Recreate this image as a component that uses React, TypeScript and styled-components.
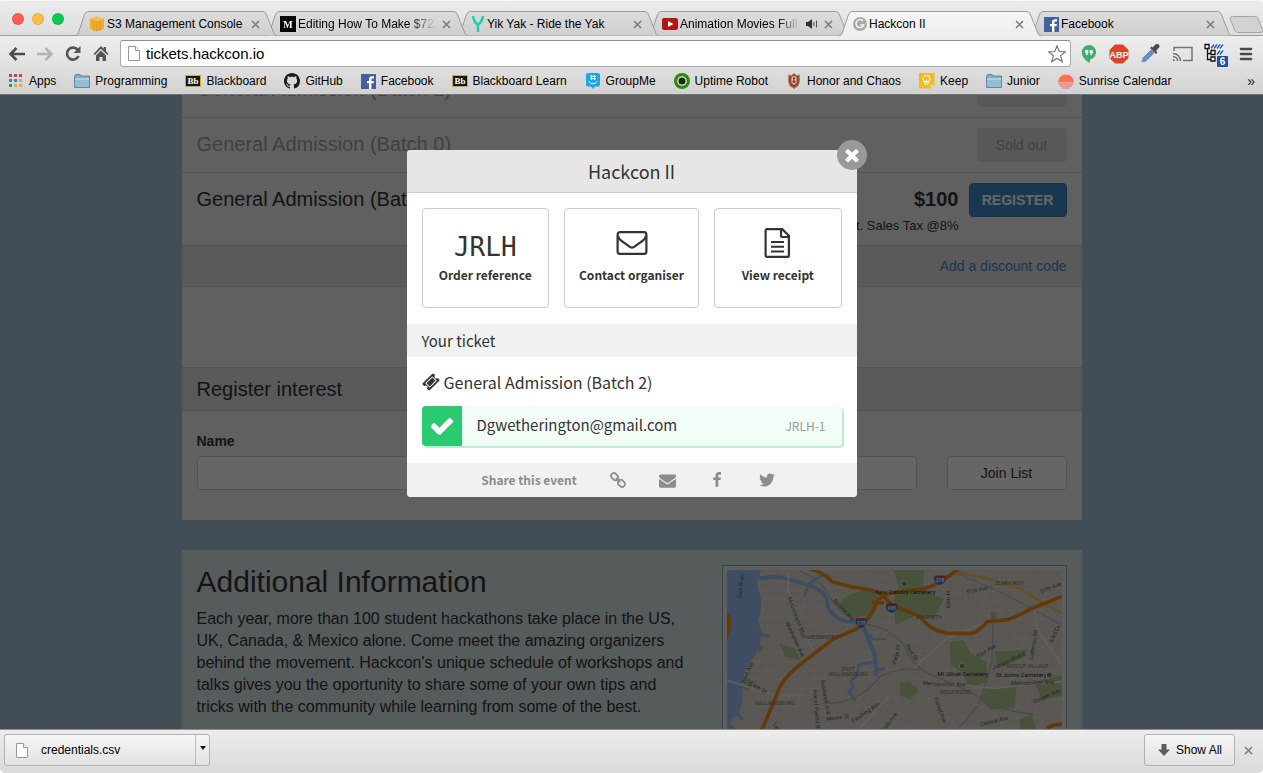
import React from 'react';
import styled, { createGlobalStyle, css } from 'styled-components';

const uiFont = '"Liberation Sans", Arial, sans-serif';
const dialogFont = '"Noto Sans CJK SC", "Noto Sans", sans-serif';
const monoFont = '"DejaVu Sans Mono", monospace';

const GlobalStyle = createGlobalStyle`
  * { box-sizing: border-box; }
  body { margin: 0; background: #fff; font-family: ${uiFont}; }
  button, input { font: inherit; color: inherit; margin: 0; }
  button { padding: 0; border: 0; background: none; cursor: pointer; }
  svg { display: block; flex: none; }
  h1, h2, p { margin: 0; font-weight: normal; }
`;

/* ---------- window ---------- */

const Window = styled.div`
  display: grid;
  grid-template-columns: minmax(0, 1fr);
  grid-template-rows: auto 1fr auto;
  height: 100vh;
  overflow: hidden;
  border-radius: 5px;
`;

const Chrome = styled.header`
  border-bottom: 1px solid #757575;
  background: #d3d3d3;
`;

const TabStrip = styled.div`
  position: relative;
  display: flex;
  align-items: flex-end;
  height: 36px;
  padding-left: 12px;
  background: linear-gradient(#ececec, #dedede);
  box-shadow: inset 0 -1px 0 #9c9c9c, inset 0 1px 0 #f7f7f7;
`;

const Lights = styled.div`
  display: flex;
  flex: none;
  gap: 8px;
  width: 63px;
  padding-bottom: 11px;
`;

const Light = styled.button<{ $color: string }>`
  width: 12px;
  height: 12px;
  border-radius: 50%;
  background: ${(p) => p.$color};
  box-shadow: inset 0 0 0 1px rgba(0, 0, 0, 0.08);
`;

const TabBox = styled.div<{ $order: number }>`
  position: relative;
  z-index: ${(p) => p.$order};
  display: flex;
  align-items: center;
  flex: 0 0 202px;
  min-width: 0;
  height: 25px;
  margin-right: -11px;
  padding: 1px 15px 0 14px;
`;

const TabShape = styled.svg`
  position: absolute;
  inset: 0;
`;

const TabTitle = styled.button<{ $fade?: boolean }>`
  position: relative;
  display: flex;
  align-items: center;
  gap: 2px;
  flex: 1;
  min-width: 0;
  overflow: hidden;
  white-space: nowrap;
  font-size: 12px;
  line-height: 16px;
  color: #000;
  ${(p) =>
    p.$fade &&
    css`
      mask-image: linear-gradient(to right, #000 82%, transparent 99%);
    `}
`;

const TabTools = styled.span`
  position: relative;
  display: flex;
  align-items: center;
  gap: 6px;
  padding-left: 4px;
  padding-right: 2px;
`;

const IconButton = styled.button`
  display: flex;
  align-items: center;
  justify-content: center;
`;

const NewTab = styled(IconButton)`
  margin: 0 0 3px 8px;
`;

const Surface = styled.div`
  background: linear-gradient(#eeeeee, #d2d2d2);
`;

const Toolbar = styled.div`
  display: flex;
  align-items: center;
  height: 34px;
  padding: 1px 10px 0 8px;
`;

const NavButtons = styled.nav`
  display: flex;
  gap: 10px;
  width: 112px;
`;

const Omnibox = styled.div`
  display: flex;
  align-items: center;
  flex: 1;
  height: 27px;
  padding: 0 4px 0 7px;
  gap: 6px;
  border: 1px solid #ababab;
  border-top-color: #8f8f8f;
  border-radius: 3px;
  background: #fff;
`;

const UrlInput = styled.input`
  flex: 1;
  min-width: 0;
  border: 0;
  padding: 0;
  outline: 0;
  background: transparent;
  font-size: 15px;
  line-height: 20px;
  color: #000;
`;

const Extensions = styled.div`
  display: flex;
  align-items: center;
  gap: 10px;
  padding-left: 8px;
`;

const BookmarkBar = styled.nav`
  display: flex;
  align-items: center;
  gap: 18px;
  height: 24px;
  padding: 0 8px 2px;
`;

const Bookmark = styled.a`
  display: flex;
  align-items: center;
  gap: 5px;
  white-space: nowrap;
  font-size: 12px;
  line-height: 16px;
  color: #000;
  text-decoration: none;
`;

const Overflow = styled.button`
  margin-left: auto;
  font-size: 14px;
  line-height: 16px;
  color: #222;
`;

/* ---------- page ---------- */

const Viewport = styled.main`
  position: relative;
  overflow: hidden;
  min-height: 0;
  background: #a8c1d7;
  color: #333;
`;

const Column = styled.div`
  display: flex;
  flex-direction: column;
  gap: 30px;
  max-width: 900px;
  margin: -32px auto 0;
`;

const Panel = styled.section`
  background: #f0f0f0;
`;

const TicketRow = styled.div<{ $off?: boolean }>`
  display: flex;
  align-items: flex-start;
  gap: 10px;
  padding: 10px 15px ${(p) => (p.$off ? 10 : 8)}px;
  border-bottom: 1px solid #ccc;
  color: ${(p) => (p.$off ? '#a2a2a2' : '#333')};
`;

const TicketName = styled.div`
  flex: 1;
  font-size: 20px;
  line-height: 32px;
`;

const Price = styled.div`
  text-align: right;
  font-size: 13px;
  line-height: 22px;
`;

const Amount = styled.strong`
  display: block;
  font-size: 20px;
  line-height: 32px;
`;

const PageButton = styled.button<{ $kind: 'off' | 'primary' | 'plain' }>`
  height: 34px;
  border-radius: 4px;
  font-size: 14px;
  line-height: 20px;
  ${(p) =>
    p.$kind === 'off' &&
    css`
      width: 90px;
      background: #dcdcdc;
      color: #a0a0a0;
    `}
  ${(p) =>
    p.$kind === 'primary' &&
    css`
      width: 98px;
      border: 1px solid #357ebd;
      background: #428bca;
      color: #fff;
      font-weight: bold;
    `}
  ${(p) =>
    p.$kind === 'plain' &&
    css`
      width: 120px;
      border: 1px solid #ccc;
      background: #fff;
      color: #333;
    `}
`;

const Discount = styled.div`
  padding: 0 15px;
  border-bottom: 1px solid #ccc;
  background: #e0e0e0;
  text-align: right;
  font-size: 14px;
  line-height: 40px;
`;

const PageLink = styled.a`
  color: #428bca;
  text-decoration: none;
`;

const Spacer = styled.div`
  height: 81px;
  border-bottom: 1px solid #ccc;
`;

const PanelTitle = styled.h2`
  padding: 0 15px;
  border-bottom: 1px solid #ccc;
  background: #e0e0e0;
  font-size: 20px;
  line-height: 42px;
`;

const InterestForm = styled.form`
  display: flex;
  align-items: flex-end;
  gap: 30px;
  padding: 20px 15px 30px;
`;

const Field = styled.div`
  display: flex;
  flex: 1;
  flex-direction: column;
  gap: 5px;
`;

const Label = styled.label`
  font-size: 14px;
  font-weight: bold;
  line-height: 20px;
`;

const TextBox = styled.input`
  height: 34px;
  padding: 0 12px;
  border: 1px solid #ccc;
  border-radius: 4px;
  background: #fff;
  font-size: 14px;
`;

const InfoPanel = styled.section`
  display: flex;
  align-items: flex-start;
  gap: 30px;
  padding: 15px;
  background: #d8e3e5;
`;

const InfoText = styled.div`
  flex: 1;
`;

const InfoTitle = styled.h1`
  margin-bottom: 10px;
  font-size: 30px;
  line-height: 33px;
`;

const Paragraph = styled.p`
  font-size: 16px;
  line-height: 22px;
`;

const MapFrame = styled.figure`
  flex: none;
  margin: 0;
  padding: 4px;
  border: 1px solid #9aa5aa;
  background: #e6ecee;
`;

/* ---------- dialog ---------- */

const Backdrop = styled.div`
  position: absolute;
  inset: 0;
  display: flex;
  justify-content: center;
  align-items: flex-start;
  padding-top: 55px;
  background: rgba(0, 0, 0, 0.6);
`;

const Dialog = styled.div`
  position: relative;
  width: 450px;
  border-radius: 4px;
  background: #fff;
  font-family: ${dialogFont};
  color: #333;
`;

const CloseDialog = styled(IconButton)`
  position: absolute;
  top: -10px;
  right: -10px;
  width: 30px;
  height: 30px;
  border-radius: 50%;
  background: #999;
  color: #fff;
`;

const DialogTitle = styled.h2`
  border-bottom: 1px solid #ccc;
  border-radius: 4px 4px 0 0;
  background: #e6e6e6;
  text-align: center;
  font-size: 18px;
  line-height: 42px;
`;

const Tiles = styled.div`
  display: grid;
  grid-template-columns: 1fr 135px 1fr;
  gap: 15px;
  padding: 15px 15px 16px;
`;

const Tile = styled.button`
  display: flex;
  flex-direction: column;
  align-items: center;
  height: 100px;
  padding-top: 16px;
  border: 1px solid #ccc;
  border-radius: 4px;
  font-size: 12px;
  font-weight: bold;
  line-height: 20px;
`;

const TileFigure = styled.span<{ $mono?: boolean }>`
  display: flex;
  align-items: center;
  height: 36px;
  margin-bottom: 4px;
  ${(p) =>
    p.$mono &&
    css`
      padding-top: 8px;
      font-family: ${monoFont};
      font-size: 26px;
      font-weight: normal;
    `}
`;

const SubTitle = styled.h2`
  padding: 0 15px;
  background: #f1f1f1;
  font-size: 15px;
  line-height: 33px;
`;

const TicketBody = styled.div`
  padding: 12px 15px 17px;
`;

const TicketType = styled.div`
  display: flex;
  align-items: center;
  gap: 4px;
  margin-bottom: 11px;
  font-size: 16px;
  line-height: 26px;
`;

const Attendee = styled.div`
  display: flex;
  align-items: flex-start;
  height: 40px;
  padding-right: 16px;
  border-radius: 4px;
  background: #f3fdf8;
  box-shadow: 2px 2px 0 #bdefd0;
  line-height: 38px;
`;

const CheckBlock = styled.span`
  display: flex;
  align-items: center;
  justify-content: center;
  width: 40px;
  height: 40px;
  margin-right: 15px;
  border-radius: 4px 0 0 4px;
  background: #2acb70;
  color: #fff;
`;

const Email = styled.span`
  flex: 1;
  font-size: 15px;
`;

const TicketCode = styled.span`
  font-size: 12px;
  line-height: 40px;
  color: #999;
`;

const ShareBar = styled.footer`
  display: flex;
  align-items: center;
  justify-content: center;
  gap: 33px;
  height: 34px;
  padding-right: 6px;
  border-radius: 0 0 4px 4px;
  background: #f1f1f1;
  color: #8c8c8c;
  font-size: 12px;
  line-height: 34px;
  font-weight: bold;
`;

/* ---------- download shelf ---------- */

const Shelf = styled.footer`
  display: flex;
  align-items: center;
  gap: 9px;
  height: 44px;
  padding: 0 10px 3px 4px;
  border-top: 1px solid #8e8e8e;
  background: linear-gradient(#ececec, #dadada);
  font-size: 12px;
  color: #000;
`;

const ShelfGroup = styled.div`
  display: flex;
  height: 32px;
  margin-right: auto;
  border: 1px solid #b2b2b2;
  border-radius: 3px;
  background: linear-gradient(#f6f6f6, #e2e2e2);
`;

const ShelfFile = styled.button`
  display: flex;
  align-items: center;
  gap: 13px;
  width: 191px;
  padding-left: 11px;
  border-right: 1px solid #bbb;
`;

const ShelfMenu = styled(IconButton)`
  width: 13px;
  padding-bottom: 4px;
`;

const ShowAll = styled.button`
  display: flex;
  align-items: center;
  gap: 6px;
  height: 32px;
  padding: 0 12px 0 13px;
  border: 1px solid #b2b2b2;
  border-radius: 3px;
  background: linear-gradient(#f6f6f6, #e2e2e2);
`;

/* ---------- icons ---------- */

const glyphs = {
  check:
    'M1671 566q0 40-28 68l-724 724-136 136q-28 28-68 28t-68-28l-136-136-362-362q-28-28-28-68t28-68l136-136q28-28 68-28t68 28l294 295 656-657q28-28 68-28t68 28l136 136q28 28 28 68z',
  times:
    'M1490 1322q0 40-28 68l-136 136q-28 28-68 28t-68-28l-294-294-294 294q-28 28-68 28t-68-28l-136-136q-28-28-28-68t28-68l294-294-294-294q-28-28-28-68t28-68l136-136q28-28 68-28t68 28l294 294 294-294q28-28 68-28t68 28l136 136q28 28 28 68t-28 68l-294 294 294 294q28 28 28 68z',
  ticket:
    'M1024 452l316 316-572 572-316-316zm-211 979l618-618q19-19 19-45t-19-45l-362-362q-18-18-45-18t-45 18l-618 618q-19 19-19 45t19 45l362 362q18 18 45 18t45-18zm889-637l-907 908q-37 37-90.500 37t-90.500-37l-126-126q56-56 56-136t-56-136-136-56-136 56l-125-126q-37-37-37-90.500t37-90.500l907-906q37-37 90.500-37t90.500 37l125 125q-56 56-56 136t56 136 136 56 136-56l126 125q37 37 37 90.500t-37 90.500z',
  mail:
    'M1792 710v794q0 66-47 113t-113 47h-1472q-66 0-113-47t-47-113v-794q44 49 101 87 362 246 497 345 57 42 92.500 65.500t94.500 48 110 24.500h2q51 0 110-24.500t94.500-48 92.500-65.500q170-123 498-345 57-39 100-87zm0-294q0 79-49 151t-122 123q-376 261-468 325-10 7-42.500 31t-54 38.500-52 32.500-57.500 27-50 9h-2q-23 0-50-9t-57.500-27-52-32.500-54-38.500-42.500-31q-91-64-262-182.500t-205-142.500q-62-42-117-115.500t-55-136.500q0-78 41.500-130t118.500-52h1472q65 0 112.500 47t47.500 113z',
  facebook:
    'M1343 12v264h-157q-86 0-116 36t-30 108v189h293l-39 296h-254v759h-306v-759h-255v-296h255v-218q0-186 104-288.500t277-102.500q147 0 228 12z',
  twitter:
    'M1684 408q-67 98-162 167 1 14 1 42 0 130-38 259.500t-115.500 248.500-184.500 210.500-258 146-323 54.500q-271 0-496-145 35 4 78 4 225 0 401-138-105-2-188-64.500t-114-159.500q33 5 61 5 43 0 85-11-112-23-185.500-111.500t-73.500-205.500v-4q68 38 146 41-66-44-105-115t-39-154q0-88 44-163 121 149 294.500 238.500t371.500 99.500q-8-38-8-74 0-134 94.500-228.500t228.500-94.500q140 0 236 102 109-21 205-78-37 115-142 178 93-10 186-50z',
};

const Glyph = ({ name, size }: { name: keyof typeof glyphs; size: number }) => (
  <svg width={size} height={size} viewBox="0 0 1792 1792" fill="currentColor">
    <path d={glyphs[name]} />
  </svg>
);

const ChainIcon = () => (
  <svg width="16" height="16" viewBox="0 0 16 16" fill="none" stroke="currentColor" strokeWidth="1.7">
    <g transform="rotate(45 8 8)">
      <rect x="-0.6" y="5.2" width="7.6" height="5.6" rx="2.8" />
      <rect x="9" y="5.2" width="7.6" height="5.6" rx="2.8" />
      <path d="M5 8h6" />
    </g>
  </svg>
);

const EnvelopeOutline = () => (
  <svg width="32" height="26" viewBox="0 0 32 26" fill="none" stroke="#333" strokeWidth="2.2">
    <rect x="1.600" y="2.100" width="28.800" height="21.800" rx="2.400" />
    <path d="M2 5.500c0 2.500 2 4.200 3.500 5.300l7 5.100c1.400 1 2.300 1.700 3.500 1.700s2.100-.7 3.500-1.700l7-5.100c1.500-1.100 3.500-2.800 3.500-5.300" />
  </svg>
);

const ReceiptIcon = () => (
  <svg width="27" height="32" viewBox="0 0 27 32" fill="none" stroke="#333" strokeWidth="2.200">
    <path d="M3 2.100h15.200l6.700 6.700V28.500a1.400 1.400 0 0 1-1.400 1.400H3a1.400 1.400 0 0 1-1.400-1.400V3.500A1.400 1.400 0 0 1 3 2.100z" />
    <path d="M17 2.500v6.500a1 1 0 0 0 1 1h6.500" />
    <path d="M7 15h13M7 19.700h13M7 24.400h13" strokeWidth="2" />
  </svg>
);

const CrossIcon = () => (
  <svg width="9" height="9" viewBox="0 0 9 9" stroke="#7a7a7a" strokeWidth="1.500">
    <path d="M1 1l7 7M8 1l-7 7" />
  </svg>
);

const Speaker = () => (
  <svg width="12" height="10" viewBox="0 0 12 10">
    <path d="M0 3h2l4-3v10l-4-3H0z" fill="#333" />
    <path d="M7.800 3v4M10.500 1.500v7" stroke="#555" strokeWidth="1.100" fill="none" />
  </svg>
);

const AwsIcon = () => (
  <svg width="16" height="16" viewBox="0 0 16 16">
    <path d="M1 3l7-2.500L15 3v10l-7 2.500L1 13z" fill="#f0ae2c" />
    <path d="M1 3l7 2 7-2-7-2.500z" fill="#f7c050" />
    <path d="M8 5v10.500M5 4v10.500M11 4v10.500" stroke="#d79417" strokeWidth=".7" />
  </svg>
);

const badgeText = { fontFamily: 'Liberation Serif', fontWeight: 700 } as const;

const MediumIcon = () => (
  <svg width="16" height="16" viewBox="0 0 16 16">
    <path fill="#000" d="M0 0h16v16H0z" />
    <text x="8" y="12" textAnchor="middle" fontSize="10" fill="#fff" {...badgeText}>M</text>
  </svg>
);

const YakIcon = () => (
  <svg width="14" height="16" viewBox="0 0 14 16" fill="none" stroke="#1fd1b2" strokeWidth="2.500">
    <path d="M2 0c.4 3.500 1.800 6.500 5 9M12 0c-.4 3.500-1.800 6.500-5 9M7 8v8" />
  </svg>
);

const YoutubeIcon = () => (
  <svg width="16" height="12" viewBox="0 0 16 12">
    <rect width="16" height="12" rx="2" fill="#b8140f" />
    <path d="M6 3l5.500 3L6 9z" fill="#fff" />
  </svg>
);

const HackconIcon = () => (
  <svg width="14" height="14" viewBox="0 0 14 14">
    <circle cx="7" cy="7" r="7" fill="#a9a9a9" />
    <path d="M10 3.900A4 4 0 1 0 10.800 8H7.500" stroke="#f3f3f3" strokeWidth="1.500" fill="none" />
  </svg>
);

const FacebookIcon = () => (
  <svg width="15" height="15" viewBox="0 0 15 15">
    <path fill="#4460a0" d="M0 0h15v15H0z" />
    <path d="M8 15V9.200H6V7h2V5.300C8 3.300 9.200 2.200 11 2.200h2v2.200h-1.400c-.9 0-1.200.4-1.200 1.200V7h2.500l-.3 2.200h-2.200V15z" fill="#fff" />
  </svg>
);

const AppsIcon = () => {
  const colors = ['#e33', '#e33', '#e33', '#2a9d50', '#2f7de0', '#f0a828', '#2a9d50', '#f0a828', '#f0a828'];
  return (
    <svg width="16" height="14" viewBox="0 0 16 14">
      {colors.map((c, i) => (
        <rect key={i} x={1 + (i % 3) * 5} y={Math.floor(i / 3) * 5} width="3" height="3" fill={c} />
      ))}
    </svg>
  );
};

const FolderIcon = () => (
  <svg width="16" height="14" viewBox="0 0 16 14">
    <path d="M.5 13.500V2.500L1.500.500h4.500l1 1.500h8.500v11.500z" fill="#86aac2" stroke="#6088a3" />
    <path d="M1 4h14v9H1z" fill="#94bbd3" />
    <path d="M1 4h14v2H1z" fill="#b0cfe0" />
  </svg>
);

const BlackboardIcon = () => (
  <svg width="16" height="12" viewBox="0 0 16 12">
    <path d="M.5.500h15v11H.5z" fill="#151515" stroke="#dda432" />
    <text x="8" y="9" textAnchor="middle" fontSize="9" fill="#fff" {...badgeText}>Bb</text>
  </svg>
);

const GithubIcon = () => (
  <svg width="16" height="16" viewBox="0 0 16 16" fill="#1b1b1b">
    <path d="M8 0C3.580 0 0 3.580 0 8c0 3.540 2.290 6.530 5.470 7.590.4.070.55-.17.55-.38 0-.19-.01-.82-.01-1.490-2.010.37-2.530-.49-2.690-.94-.09-.23-.48-.94-.82-1.130-.28-.15-.68-.52-.01-.53.63-.01 1.080.58 1.230.82.72 1.210 1.870.87 2.330.66.07-.52.28-.87.51-1.070-1.780-.2-3.640-.89-3.640-3.950 0-.87.31-1.590.82-2.150-.08-.2-.36-1.020.08-2.120 0 0 .67-.21 2.200.82.64-.18 1.320-.27 2-.27s1.360.09 2 .27c1.530-1.040 2.200-.82 2.200-.82.44 1.100.16 1.920.08 2.120.51.56.82 1.270.82 2.150 0 3.070-1.870 3.750-3.650 3.950.29.25.54.73.54 1.480 0 1.070-.01 1.930-.01 2.200 0 .21.15.46.55.38A8.010 8.010 0 0 0 16 8c0-4.420-3.580-8-8-8z" />
  </svg>
);

const GroupMeIcon = () => (
  <svg width="16" height="16" viewBox="0 0 16 16">
    <path d="M3 0h10a2 2 0 0 1 2 2v9.500a2 2 0 0 1-2 2h-3L8 16l-2-2.500H3a2 2 0 0 1-2-2V2a2 2 0 0 1 2-2z" fill="#17a8ef" />
    <path d="M6.500 2v5M9.500 2v5M5.200 3.300h5.600M5.200 5.700h5.600M4 8c1 3.500 7 3.500 8 0" stroke="#fff" strokeWidth="1" fill="none" />
  </svg>
);

const UptimeIcon = () => (
  <svg width="16" height="16" viewBox="0 0 16 16">
    <circle cx="8" cy="8" r="8" fill="#2c8a0d" />
    <circle cx="8" cy="8" r="4.200" fill="#1c2a1c" stroke="#e5efe0" strokeWidth="1.300" />
  </svg>
);

const CrestIcon = () => (
  <svg width="16" height="16" viewBox="0 0 16 16">
    <path d="M2.500 2l3 .5L8 .5l2.500 2 3-.5v7L12 13l-4 2.500L4 13 2.500 9z" fill="#8d4a33" stroke="#b9876a" />
    <path d="M8 3l2.500 1v5.500L8 12l-2.500-2.500V4z" fill="#e2c7b0" />
    <circle cx="8" cy="5.500" r="1.200" fill="#a52a20" />
    <circle cx="8" cy="8.500" r="1.500" fill="#a52a20" />
  </svg>
);

const KeepIcon = () => (
  <svg width="16" height="16" viewBox="0 0 16 16">
    <path d="M0 0h15.500v11.500l-4 4H0z" fill="#f4b820" />
    <path d="M11.500 15.500v-4h4z" fill="#fbdc86" />
    <circle cx="7.500" cy="5.800" r="3.300" fill="none" stroke="#fff" strokeWidth="1.100" />
    <path d="M6 9v2.500h3V9M7.500 9V6.500" stroke="#fff" fill="none" />
  </svg>
);

const SunriseIcon = () => (
  <svg width="16" height="16" viewBox="0 0 16 16">
    <path d="M0 9.500a8 8 0 1 1 16 0z" fill="#fb7350" />
    <path d="M.5 11h15M2 13h12M4.500 15h7" stroke="#f75c6c" strokeWidth="1.200" />
  </svg>
);

const PageIcon = () => (
  <svg width="12" height="15" viewBox="0 0 12 15" fill="#fff" stroke="#999">
    <path d="M.5.500h7l4 4v10H.5z" />
    <path d="M7.500.500v4h4" />
  </svg>
);

const BackIcon = ({ color }: { color: string }) => (
  <svg width="18" height="14" viewBox="0 0 18 14" fill="none" stroke={color} strokeWidth="2.600">
    <path d="M17 7H3M8.500 1L2.500 7l6 6" />
  </svg>
);

const ForwardIcon = ({ color }: { color: string }) => (
  <svg width="18" height="14" viewBox="0 0 18 14" fill="none" stroke={color} strokeWidth="2.600">
    <path d="M1 7h14M9.500 1l6 6-6 6" />
  </svg>
);

const ReloadIcon = () => (
  <svg width="18" height="16" viewBox="0 0 18 16">
    <path d="M13.800 4A6 6 0 1 0 14.500 10" fill="none" stroke="#555" strokeWidth="2.600" />
    <path d="M16.500 0v7h-7z" fill="#555" />
  </svg>
);

const HomeIcon = () => (
  <svg width="18" height="16" viewBox="0 0 18 16" fill="#555">
    <path d="M9 0L1.500 8l1.300 1L9 2.800 15.200 9l1.300-1-2.500-2.800V1h-2.200v1.800z" />
    <path d="M4 9.500L9 4.500l5 5V15h-3.500v-4h-3v4H4z" />
  </svg>
);

const StarIcon = () => (
  <svg width="18" height="18" viewBox="0 0 18 18" fill="#fff" stroke="#777" strokeWidth="1.200">
    <path d="M9 1l2.300 5.500 6 .4-4.600 3.900 1.500 5.800L9 13.400l-5.200 3.200 1.500-5.800L.7 6.900l6-.4z" />
  </svg>
);

const HangoutsIcon = () => (
  <svg width="20" height="20" viewBox="0 0 20 20">
    <path d="M10 1a7.300 7.300 0 0 1 1 14.500V19c-4-2-8.200-6-8.200-10.500A7.300 7.300 0 0 1 10 1z" fill="#3fae6a" />
    <path d="M6.300 6h3v3.200L8 11.300H6.800l.8-2.100H6.300zM10.700 6h3v3.200l-1.300 2.100h-1.200l.8-2.100h-1.300z" fill="#fff" />
  </svg>
);

const AdblockIcon = () => (
  <svg width="20" height="20" viewBox="0 0 20 20">
    <path d="M6 .5h8L19.500 6v8L14 19.500H6L.5 14V6z" fill="#de4425" />
    <text x="10" y="13.500" textAnchor="middle" fontFamily="Liberation Sans" fontWeight="700" fontSize="9" fill="#fff">ABP</text>
  </svg>
);

const DropperIcon = () => (
  <svg width="24" height="20" viewBox="0 0 24 20">
    <path d="M3 18l1-4 8-8 3 3-8 8z" fill="#5a92dd" stroke="#8a8f98" />
    <path d="M11 4l6 6 1.500-1.500-1.500-1.500 3-3.500a2.300 2.300 0 0 0-3.200-3.200L13.500 3.500 12.500 2.500z" fill="#4a4a4e" />
  </svg>
);

const CastIcon = () => (
  <svg width="20" height="16" viewBox="0 0 20 16" fill="none" stroke="#747474" strokeWidth="1.500">
    <path d="M1 5V1.500h18v13H10" />
    <path d="M0 7.500a7.500 7.500 0 0 1 7.500 7.500M0 10.500A4.500 4.500 0 0 1 4.500 15" />
    <path d="M0 15v-2a2 2 0 0 1 2 2z" fill="#747474" stroke="none" />
  </svg>
);

const OutlineIcon = () => (
  <svg width="26" height="26" viewBox="0 0 26 26" fill="none">
    <path d="M4.500 7v11.500h4M4.500 12.500h4" stroke="#111" strokeWidth="1.300" />
    <path d="M2 3.500h4v4H2zM8 9.500h4v4H8zM8 16h4v4H8z" stroke="#111" strokeWidth="1.300" fill="#fff" />
    <path d="M8 7.500l3-4M11 7.500l3-4M14 7.500l3-4M17 7.500l3-4M14 13.500l3-4M17 13.500l3-4M14 19.500l2-3" stroke="#1f5fb0" strokeWidth="1.300" />
    <rect x="14" y="15" width="11" height="11" rx="1" fill="#1f4fa8" />
    <text x="19.500" y="24" textAnchor="middle" fontFamily="Liberation Sans" fontWeight="700" fontSize="10" fill="#fff">6</text>
  </svg>
);

const MenuIcon = () => (
  <svg width="14" height="14" viewBox="0 0 14 14" stroke="#4a4a4a" strokeWidth="2.600" strokeLinecap="round">
    <path d="M2 2h10M2 7h10M2 12h10" />
  </svg>
);

/* ---------- map drawing ---------- */

const roadLabels: [string, number, number, number][] = [
  ['McGuinness Blvd', 203, 158, 70],
  ['Manhattan Ave', 196, 234, 65],
  ['Review Ave', 338, 168, 46],
  ['Rust St', 556, 302, 58],
  ['Page Pl', 528, 358, -76],
  ['65th Pl', 690, 190, -88],
  ['51st Ave', 740, 147, -12],
  ['57th Ave', 963, 146, -22],
  ['63rd Dr', 998, 294, -65],
  ['Eliot Ave', 774, 340, -32],
  ['Juniper Blvd S', 820, 374, -24],
  ['Lutheran Rd', 938, 345, -80],
  ['Kent Ave', 74, 415, -66],
  ['S 4th St', 84, 420, 26],
  ['Bushwick Ave', 302, 406, 80],
  ['Ave of Puerto Rico', 280, 434, 86],
  ['Moore St', 320, 528, -8],
  ['Flushing Ave', 400, 534, -34],
  ['DeKalb Ave', 480, 576, -52],
  ['Metropolitan Ave', 608, 420, 2],
  ['Metropolitan Ave', 874, 421, -2],
  ['Forest Ave', 642, 460, 70],
  ['Cooper Ave', 942, 476, -24],
  ['Central Ave', 782, 544, -14],
  ['Lee Ave', 158, 538, 58],
];

const townLabels: [string, number, number][] = [
  ['GREENPOINT', 306, 281],
  ['MASPETH', 628, 223],
  ['ELMHURST', 868, 120],
  ['EAST', 384, 379],
  ['WILLIAMSBURG', 384, 394],
  ['WILLIAMSBURG', 164, 480],
  ['RIDGEWOOD', 706, 447],
  ['MIDDLE VILLAGE', 922, 368],
];

const streetLines = Array.from({ length: 46 }, (_, i) => i);

const Shield = ({ x, y, label }: { x: number; y: number; label: string }) => (
  <g transform={`translate(${x} ${y})`}>
    <path d="M-16-12h32q4 14-4 22-8 4-12 6-4-2-12-6-8-8-4-22z" fill="#3f7fd5" />
    <path d="M-16-12h32v5h-32z" fill="#e0453f" />
    <text y="8" textAnchor="middle" fontSize="15" fontWeight="700" fill="#fff">{label}</text>
  </g>
);

const BrooklynMap = () => (
  <svg width="335" height="200" viewBox="21 75 1005 600" fontFamily="Roboto, sans-serif" fontSize="17" role="img" aria-label="Map of Brooklyn and Queens">
    <path d="M0 0h1100v700H0z" fill="#e0dad0" />
    <g stroke="#ebe8e2" strokeWidth="2" fill="none">
      {streetLines.map((i) => (
        <path key={`a${i}`} d={`M${-180 + i * 30} 680L${i * 30 - 20} 60`} />
      ))}
      {streetLines.slice(0, 26).map((i) => (
        <path key={`b${i}`} d={`M0 ${40 + i * 26}L1050 ${-20 + i * 30}`} />
      ))}
    </g>
    <g fill="#b3cb92">
      <path d="M380 152l66-22 30 28-22 52-62 8-38-36z" />
      <path d="M520 75h92l-4 60 64 26-30 58-60-6-56 28-6-76 16-40z" />
      <path d="M690 290l40-4 24 40 44 24 6 60-56 18-22-46-36-24z" />
      <path d="M786 428l104-6-6 66-74 6-26-28z" />
      <path d="M826 320l94-6-8 24-80 34z" />
      <path d="M944 410l82-20v62l-60 14z" />
      <path d="M540 414l28-4 28 24-24 30-34-14zM178 296l44 12 22 38-46-10zM112 292l22 14-14 18-14-16zM812 198l16 6v20h-14zM900 520l36-10 12 42h-46zM64 426l20-26 26 10-30 28z" />
    </g>
    <path d="M21 75h104q-20 34-8 64 14 40-2 90l10 34 28 6-2 8-28-2q-4 40-28 70-34 50-28 90 2 40-10 70l14 16-6 6-16-16-20 20 40 50-10 6-48-50z" fill="#9cc0f2" />
    <g fill="none" stroke="#9cc0f2" strokeLinejoin="round">
      <path d="M118 100q60-10 94 6 50 10 84 28 30 20 26 48 18 46 84 50 24 4 30 28l28 70 6 50" strokeWidth="12" />
      <path d="M262 118l50-30M262 128l-8 26M440 262l20 20h38M470 350l-54 8-4 34-18 16 4 22-12 8 20 28M470 370l-8 20M466 394l8-20 22-4" strokeWidth="8" />
    </g>
    <g fill="none" stroke="#bdbab4" strokeWidth="4">
      <path d="M240 78q70 30 90 80 50 70 110 80 70 10 110 60 30 70 80 90 80 30 150 70 60 40 160 50" />
      <path d="M320 475q100 0 160-80 60-30 120-20M700 80l160 70 166 90M820 200l-4 150-40 130-60 70" />
    </g>
    <g fill="none" stroke="#f2f0ec" strokeWidth="5">
      <path d="M206 80l-2 50 36 120 50 80M21 406l140 44h90M580 370l100-90 120-50M944 190l6 60 76 110M620 410l200 20 206-20M420 550l90-100" />
    </g>
    <path d="M700 78l90 20 110 32 60 40 66 36" fill="none" stroke="#f5c860" strokeWidth="8" />
    <g fill="none" stroke="#f59018" strokeWidth="11">
      <path d="M246 66q60 10 90 44l60 16q60 6 90 24l30 30 84 34q30 44 80 50l72 2q20-4 50-36l60-6q40-14 70-32l94-38" />
      <path d="M720 66q-60 56-114 66l-90 12q-34 6-46 30-20 52-60 78l-70 30-104 80q-54 44-64 84l-60 140" />
      <path d="M21 206q14 20 0 70M980 550q20-14 46-12" />
      <path d="M456 172l36 2" />
    </g>
    <g fill="#857a6c" fontStyle="italic" fontSize="17" textAnchor="middle">
      {townLabels.map(([t, x, y]) => (
        <text key={t + y} x={x} y={y}>{t}</text>
      ))}
    </g>
    <g fill="#5c5c5c">
      {roadLabels.map(([t, x, y, r]) => (
        <text key={t + x} transform={`translate(${x} ${y}) rotate(${r})`}>{t}</text>
      ))}
      <text transform="translate(64 160) rotate(-84)" fontStyle="italic" fill="#4f6f9f">East River</text>
    </g>
    <g fill="#2f2f2f" fontSize="18">
      <text x="466" y="146">New Calvary Cemetery</text>
      <text x="652" y="393">Mt Olivet Cemetery</text>
      <text x="828" y="397">St Johns Cemetery</text>
    </g>
    <g fill="#6b9a4e" stroke="#e8efdf" strokeWidth="3">
      <circle cx="553" cy="116" r="9" />
      <circle cx="727" cy="363" r="9" />
      <circle cx="988" cy="390" r="9" />
    </g>
    <Shield x={660} y={104} label="278" />
    <Shield x={515} y={188} label="495" />
    <Shield x={424} y={232} label="278" />
  </svg>
);

/* ---------- composition ---------- */

interface TabProps {
  title: string;
  icon: React.ReactNode;
  order: number;
  active?: boolean;
  fade?: boolean;
  audio?: boolean;
}

const Tab = ({ title, icon, order, active, fade, audio }: TabProps) => (
  <TabBox $order={order}>
    <TabShape width="202" height="25" viewBox="0 0 202 25">
      <defs>
        <linearGradient id={`tab${order}`} x1="0" y1="0" x2="0" y2="1">
          <stop offset="0" stopColor={active ? '#f6f6f6' : '#dcdcdc'} />
          <stop offset="1" stopColor={active ? '#eeeeee' : '#cfcfcf'} />
        </linearGradient>
      </defs>
      <path
        d="M0 24.500C3 24.500 3 22.500 4 20L9 5C10 2 11 .5 14 .5H187C190 .5 191 2 192 5L198 20C199 22.500 199 24.500 202 24.500"
        fill={`url(#tab${order})`}
        stroke="#9c9c9c"
      />
      {active && <path d="M2 24.500h198" stroke="#eeeeee" />}
    </TabShape>
    <TabTitle type="button" $fade={fade}>
      {icon}
      {title}
    </TabTitle>
    <TabTools>
      {audio && <Speaker />}
      <IconButton type="button" aria-label={`Close ${title}`}>
        <CrossIcon />
      </IconButton>
    </TabTools>
  </TabBox>
);

const bookmarks: [string, React.ReactNode][] = [
  ['Apps', <AppsIcon />],
  ['Programming', <FolderIcon />],
  ['Blackboard', <BlackboardIcon />],
  ['GitHub', <GithubIcon />],
  ['Facebook', <FacebookIcon />],
  ['Blackboard Learn', <BlackboardIcon />],
  ['GroupMe', <GroupMeIcon />],
  ['Uptime Robot', <UptimeIcon />],
  ['Honor and Chaos', <CrestIcon />],
  ['Keep', <KeepIcon />],
  ['Junior', <FolderIcon />],
  ['Sunrise Calendar', <SunriseIcon />],
];

const BrowserChrome = () => (
  <Chrome>
    <TabStrip>
      <Lights>
        <Light type="button" aria-label="Close window" $color="#fc5b57" />
        <Light type="button" aria-label="Minimise window" $color="#fdbc4b" />
        <Light type="button" aria-label="Zoom window" $color="#0bc953" />
      </Lights>
      <Tab title="S3 Management Console" icon={<AwsIcon />} order={6} />
      <Tab title="Editing How To Make $72." icon={<MediumIcon />} order={5} fade />
      <Tab title="Yik Yak - Ride the Yak" icon={<YakIcon />} order={4} />
      <Tab title="Animation Movies Full M" icon={<YoutubeIcon />} order={3} fade audio />
      <Tab title="Hackcon II" icon={<HackconIcon />} order={7} active />
      <Tab title="Facebook" icon={<FacebookIcon />} order={2} />
      <NewTab type="button" aria-label="New tab">
        <svg width="34" height="17" viewBox="0 0 34 17">
          <path d="M3.500.500h22c2 0 3 .8 3.800 2.500l4 10.500c.5 2-.3 3-2.300 3H9.500c-2 0-3-.8-3.800-2.500L1.500 3.500c-.6-2 0-3 2-3z" fill="#d2d2d2" stroke="#a4a4a4" />
        </svg>
      </NewTab>
    </TabStrip>
    <Surface>
      <Toolbar>
        <NavButtons>
          <IconButton type="button" aria-label="Back"><BackIcon color="#4c4c4c" /></IconButton>
          <IconButton type="button" aria-label="Forward"><ForwardIcon color="#b4b4b4" /></IconButton>
          <IconButton type="button" aria-label="Reload"><ReloadIcon /></IconButton>
          <IconButton type="button" aria-label="Home"><HomeIcon /></IconButton>
        </NavButtons>
        <Omnibox>
          <PageIcon />
          <UrlInput aria-label="Address" defaultValue="tickets.hackcon.io" />
          <IconButton type="button" aria-label="Bookmark this page"><StarIcon /></IconButton>
        </Omnibox>
        <Extensions>
          <IconButton type="button" aria-label="Hangouts"><HangoutsIcon /></IconButton>
          <IconButton type="button" aria-label="Adblock"><AdblockIcon /></IconButton>
          <IconButton type="button" aria-label="Colour picker"><DropperIcon /></IconButton>
          <IconButton type="button" aria-label="Cast"><CastIcon /></IconButton>
          <IconButton type="button" aria-label="Outline"><OutlineIcon /></IconButton>
          <IconButton type="button" aria-label="Menu"><MenuIcon /></IconButton>
        </Extensions>
      </Toolbar>
      <BookmarkBar>
        {bookmarks.map(([name, icon]) => (
          <Bookmark key={name} href="#">
            {icon}
            {name}
          </Bookmark>
        ))}
        <Overflow type="button">»</Overflow>
      </BookmarkBar>
    </Surface>
  </Chrome>
);

const TicketDialog = () => (
  <Backdrop>
    <Dialog role="dialog" aria-label="Hackcon II">
      <DialogTitle>Hackcon II</DialogTitle>
      <Tiles>
        <Tile type="button">
          <TileFigure $mono>JRLH</TileFigure>
          Order reference
        </Tile>
        <Tile type="button">
          <TileFigure><EnvelopeOutline /></TileFigure>
          Contact organiser
        </Tile>
        <Tile type="button">
          <TileFigure><ReceiptIcon /></TileFigure>
          View receipt
        </Tile>
      </Tiles>
      <SubTitle>Your ticket</SubTitle>
      <TicketBody>
        <TicketType>
          <Glyph name="ticket" size={18} />
          General Admission (Batch 2)
        </TicketType>
        <Attendee>
          <CheckBlock>
            <Glyph name="check" size={26} />
          </CheckBlock>
          <Email>Dgwetherington@gmail.com</Email>
          <TicketCode>JRLH-1</TicketCode>
        </Attendee>
      </TicketBody>
      <ShareBar>
        Share this event
        <IconButton type="button" aria-label="Copy link"><ChainIcon /></IconButton>
        <IconButton type="button" aria-label="Share by email"><Glyph name="mail" size={17} /></IconButton>
        <IconButton type="button" aria-label="Share on Facebook"><Glyph name="facebook" size={16} /></IconButton>
        <IconButton type="button" aria-label="Share on Twitter"><Glyph name="twitter" size={18} /></IconButton>
      </ShareBar>
      <CloseDialog type="button" aria-label="Close">
        <Glyph name="times" size={20} />
      </CloseDialog>
    </Dialog>
  </Backdrop>
);

const App = () => (
  <>
    <GlobalStyle />
    <Window>
      <BrowserChrome />
      <Viewport>
        <Column>
          <Panel>
            <TicketRow $off>
              <TicketName>General Admission (Batch 1)</TicketName>
              <PageButton type="button" $kind="off">Sold out</PageButton>
            </TicketRow>
            <TicketRow $off>
              <TicketName>General Admission (Batch 0)</TicketName>
              <PageButton type="button" $kind="off">Sold out</PageButton>
            </TicketRow>
            <TicketRow>
              <TicketName>General Admission (Batch 2)</TicketName>
              <Price>
                <Amount>$100</Amount>
                est. Sales Tax @8%
              </Price>
              <PageButton type="button" $kind="primary">REGISTER</PageButton>
            </TicketRow>
            <Discount>
              <PageLink href="#">Add a discount code</PageLink>
            </Discount>
            <Spacer />
            <PanelTitle>Register interest</PanelTitle>
            <InterestForm>
              <Field>
                <Label htmlFor="name">Name</Label>
                <TextBox id="name" />
              </Field>
              <PageButton type="button" $kind="plain">Join List</PageButton>
            </InterestForm>
          </Panel>
          <InfoPanel>
            <InfoText>
              <InfoTitle>Additional Information</InfoTitle>
              <Paragraph>
                Each year, more than 100 student hackathons take place in the US, UK, Canada, &amp; Mexico alone. Come
                meet the amazing organizers behind the movement. Hackcon's unique schedule of workshops and talks gives
                you the oportunity to share some of your own tips and tricks with the community while learning from
                some of the best.
              </Paragraph>
            </InfoText>
            <MapFrame>
              <BrooklynMap />
            </MapFrame>
          </InfoPanel>
        </Column>
        <TicketDialog />
      </Viewport>
      <Shelf>
        <ShelfGroup>
          <ShelfFile type="button">
            <PageIcon />
            credentials.csv
          </ShelfFile>
          <ShelfMenu type="button" aria-label="Download options">
            <svg width="6" height="4" viewBox="0 0 6 4"><path d="M0 0h6L3 4z" fill="#111" /></svg>
          </ShelfMenu>
        </ShelfGroup>
        <ShowAll type="button">
          <svg width="12" height="12" viewBox="0 0 12 12"><path d="M3.500 0h5v5.500H12L6 12 0 5.500h3.500z" fill="#5c5c5c" /></svg>
          Show All
        </ShowAll>
        <IconButton type="button" aria-label="Close downloads bar"><CrossIcon /></IconButton>
      </Shelf>
    </Window>
  </>
);

export default App;
